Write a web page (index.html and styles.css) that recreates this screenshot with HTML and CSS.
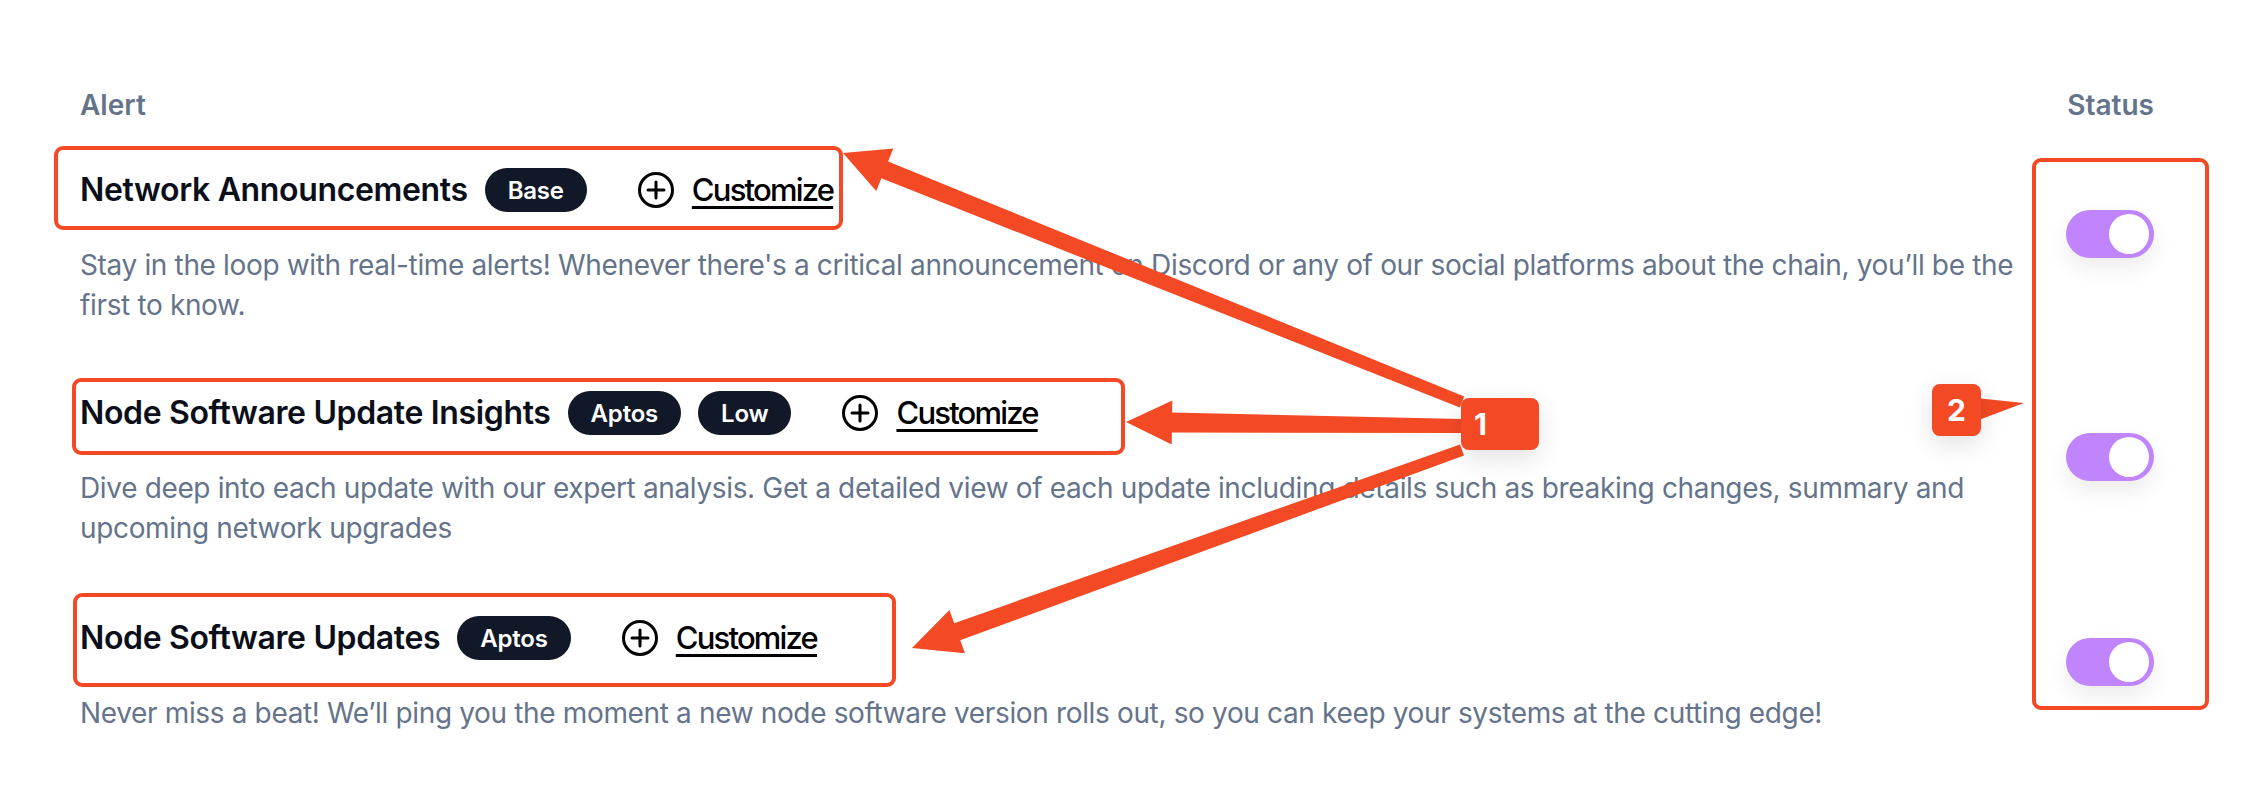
FILE: index.html
```html
<!DOCTYPE html>
<html lang="en">
<head>
<meta charset="utf-8">
<title>Alerts</title>
<link rel="stylesheet" href="styles.css">
</head>
<body>
<div class="page">
  <div class="table">
    <div class="thead">
      <span class="th">Alert</span>
      <span class="th th-status">Status</span>
    </div>

    <div class="row row-1">
      <div class="info">
        <div class="title-line">
          <h3 class="title">Network Announcements</h3>
          <span class="badge">Base</span>
          <a class="customize" href="#">
            <svg class="plus" viewBox="0 0 38 38" aria-hidden="true"><circle cx="19" cy="19" r="16.5" fill="none" stroke="#000" stroke-width="3"/><path d="M19 11v16M11 19h16" stroke="#000" stroke-width="3" stroke-linecap="round"/></svg>
            <span class="customize-text">Customize</span>
          </a>
        </div>
        <p class="desc">Stay in the loop with real-time alerts! Whenever there's a critical announcement on Discord or any of our social platforms about the chain, you’ll be the first to know.</p>
      </div>
      <div class="status"><span class="toggle"><span class="knob"></span></span></div>
    </div>

    <div class="row row-2">
      <div class="info">
        <div class="title-line">
          <h3 class="title">Node Software Update Insights</h3>
          <span class="badge">Aptos</span>
          <span class="badge">Low</span>
          <a class="customize" href="#">
            <svg class="plus" viewBox="0 0 38 38" aria-hidden="true"><circle cx="19" cy="19" r="16.5" fill="none" stroke="#000" stroke-width="3"/><path d="M19 11v16M11 19h16" stroke="#000" stroke-width="3" stroke-linecap="round"/></svg>
            <span class="customize-text">Customize</span>
          </a>
        </div>
        <p class="desc">Dive deep into each update with our expert analysis. Get a detailed view of each update including details such as breaking changes, summary and upcoming network upgrades</p>
      </div>
      <div class="status"><span class="toggle"><span class="knob"></span></span></div>
    </div>

    <div class="row row-3">
      <div class="info">
        <div class="title-line">
          <h3 class="title">Node Software Updates</h3>
          <span class="badge">Aptos</span>
          <a class="customize" href="#">
            <svg class="plus" viewBox="0 0 38 38" aria-hidden="true"><circle cx="19" cy="19" r="16.5" fill="none" stroke="#000" stroke-width="3"/><path d="M19 11v16M11 19h16" stroke="#000" stroke-width="3" stroke-linecap="round"/></svg>
            <span class="customize-text">Customize</span>
          </a>
        </div>
        <p class="desc">Never miss a beat! We’ll ping you the moment a new node software version rolls out, so you can keep your systems at the cutting edge!</p>
      </div>
      <div class="status"><span class="toggle"><span class="knob"></span></span></div>
    </div>
  </div>

  <div class="annotations">
    <svg class="anno-svg" width="2249" height="798" viewBox="0 0 2249 798" aria-hidden="true">
      <g fill="none" stroke="#f34a25" stroke-width="4">
        <rect x="56" y="148" width="785" height="80" rx="7"/>
        <rect x="74" y="380" width="1049" height="73" rx="7"/>
        <rect x="75" y="595" width="819" height="90" rx="7"/>
        <rect x="2034" y="160" width="173" height="548" rx="7"/>
      </g>
      <g fill="#f34a25">
        <polygon points="843,153 893.3,148.5 888.1,161.5 1464.2,396.4 1459.8,407.6 881.4,178.2 876.2,191.1"/>
        <polygon points="1126,422 1172.3,400.5 1172.1,412.5 1462.1,419 1461.9,433 1171.9,432.5 1171.7,444.5"/>
        <polygon points="912,648 949.4,610.1 954.2,623.2 1460,444.4 1464,455.6 960.2,640.2 965,653.3"/>
        <polygon points="1976,398 2024,403 1976,421"/>
      </g>
    </svg>
    <div class="marker marker-1">1</div>
    <div class="marker marker-2">2</div>
  </div>
</div>
</body>
</html>
```

FILE: styles.css
```css
* { box-sizing: border-box; }

html, body {
  margin: 0;
  padding: 0;
  background: #ffffff;
}

body {
  font-family: Inter, "Noto Sans", "Liberation Sans", sans-serif;
  color: #0f172a;
  width: 2249px;
  height: 798px;
  overflow: hidden;
}

.page {
  position: relative;
  width: 2249px;
  height: 798px;
  padding: 85px 95px 0 80px;
}

.thead {
  display: flex;
  justify-content: space-between;
  height: 40px;
}

.th {
  font-size: 28px;
  line-height: 40px;
  font-weight: 600;
  color: #64748b;
}

.row {
  display: grid;
  grid-template-columns: 1fr 88px;
  column-gap: 32px;
  align-items: center;
}

.row-1 { margin-top: 41px; }
.row-2 { margin-top: 64px; }
.row-3 { margin-top: 66px; }

.title-line {
  display: flex;
  align-items: center;
  gap: 17px;
  height: 48px;
}

.title {
  margin: 0;
  font-size: 32px;
  line-height: 48px;
  font-weight: 600;
  letter-spacing: -0.35px;
  color: #0b0f1a;
}

.badge {
  display: inline-flex;
  align-items: center;
  height: 44px;
  padding: 0 23px;
  border-radius: 22px;
  background: #111827;
  color: #ffffff;
  font-size: 24px;
  font-weight: 600;
  letter-spacing: -0.2px;
}

.customize {
  display: inline-flex;
  align-items: center;
  gap: 17px;
  margin-left: 33px;
  color: #000000;
  text-decoration: none;
}

.plus {
  width: 38px;
  height: 38px;
  display: block;
}

.customize-text {
  font-size: 31px;
  line-height: 48px;
  font-weight: 500;
  letter-spacing: -1.8px;
  text-decoration: underline;
  text-decoration-thickness: 3px;
  text-underline-offset: 5px;
}

.desc {
  margin: 31px 0 0 0;
  font-size: 28px;
  line-height: 40px;
  letter-spacing: -0.35px;
  color: #64748b;
}

.status {
  display: flex;
  justify-content: flex-end;
  padding-bottom: 23px;
}

.toggle {
  position: relative;
  display: block;
  width: 88px;
  height: 48px;
  border-radius: 24px;
  background: #c084fc;
  box-shadow: 0 10px 22px rgba(0, 0, 0, 0.08);
}

.knob {
  position: absolute;
  top: 4px;
  right: 5px;
  width: 40px;
  height: 40px;
  border-radius: 50%;
  background: #ffffff;
}

.annotations {
  position: absolute;
  inset: 0;
  pointer-events: none;
}

.anno-svg {
  position: absolute;
  left: 0;
  top: 0;
}

.marker {
  position: absolute;
  height: 52px;
  border-radius: 8px;
  background: #f34a25;
  color: #ffffff;
  font-size: 30px;
  font-weight: 700;
  line-height: 52px;
  box-shadow: 0 8px 26px rgba(0, 0, 0, 0.12);
}

.marker-1 {
  left: 1461px;
  top: 398px;
  width: 78px;
  padding-left: 13px;
}

.marker-2 {
  left: 1932px;
  top: 384px;
  width: 49px;
  text-align: center;
}
```
